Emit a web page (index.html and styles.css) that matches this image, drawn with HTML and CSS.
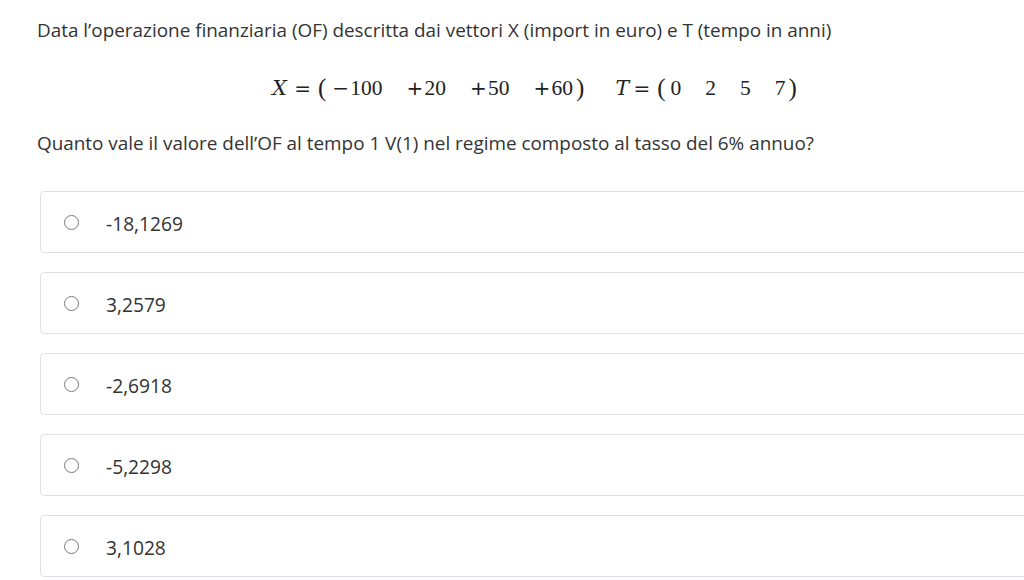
FILE: index.html
```html
<!DOCTYPE html>
<html lang="it">
<head>
<meta charset="utf-8">
<link rel="stylesheet" href="styles.css">
</head>
<body>
<div class="page">
  <p class="intro">Data l’operazione finanziaria (OF) descritta dai vettori X (import in euro) e T (tempo in anni)</p>
  <div class="math">
    <span class="var">X</span><span class="eq">=</span>
    <span class="paren">(</span>
    <span class="matrix x">
      <span class="cell"><span class="sign">−</span>100</span>
      <span class="cell"><span class="sign">+</span>20</span>
      <span class="cell"><span class="sign">+</span>50</span>
      <span class="cell"><span class="sign">+</span>60</span>
    </span>
    <span class="paren close">)</span>
    <span class="var t">T</span><span class="eq">=</span>
    <span class="paren">(</span>
    <span class="matrix t">
      <span class="cell">0</span><span class="cell">2</span><span class="cell">5</span><span class="cell">7</span>
    </span>
    <span class="paren">)</span>
  </div>
  <p class="question">Quanto vale il valore dell’OF al tempo 1 V(1) nel regime composto al tasso del 6% annuo?</p>
  <div class="options">
    <label class="option"><span class="radio"></span><span class="val">-18,1269</span></label>
    <label class="option"><span class="radio"></span><span class="val">3,2579</span></label>
    <label class="option"><span class="radio"></span><span class="val">-2,6918</span></label>
    <label class="option"><span class="radio"></span><span class="val">-5,2298</span></label>
    <label class="option"><span class="radio"></span><span class="val">3,1028</span></label>
  </div>
</div>
</body>
</html>
```
FILE: styles.css
```css
html, body {
  margin: 0;
  padding: 0;
  background: #fff;
  overflow: hidden;
}
.page {
  padding: 16px 0 0 37px;
  font-family: "Open Sans", "Noto Sans", sans-serif;
  font-size: 18.9px;
  color: #333;
}
.intro, .question {
  margin: 0;
  line-height: 28px;
}
.math {
  display: flex;
  justify-content: center;
  align-items: center;
  font-family: "Liberation Serif", "DejaVu Serif", serif;
  font-size: 21.5px;
  color: #222;
  margin: 28px 0 0 0;
  padding-left: 8px;
  height: 32px;
}
.var {
  font-family: "DejaVu Serif", "Liberation Serif", serif;
  font-style: italic;
  font-size: 20.5px;
  width: 19px;
}
.var.t {
  width: 15px;
  margin-left: 31px;
}
.eq {
  font-family: "DejaVu Sans", sans-serif;
  font-size: 20px;
  margin: 0 7px 0 3px;
}
.paren {
  font-size: 25px;
  line-height: 1;
  margin-top: -2px;
}
.paren.close { margin-left: 3px; }
.matrix {
  display: inline-flex;
  gap: 24px;
  margin-left: 6px;
}
.matrix.t {
  gap: 24px;
  margin-left: 5px;
  margin-right: 3px;
}
.cell {
  display: inline-flex;
  align-items: baseline;
}
.sign {
  font-family: "DejaVu Sans", sans-serif;
  font-size: 20px;
  width: 17px;
  text-align: left;
  margin-right: 1px;
}
.question { margin-top: 25px; }
.options {
  margin-top: 34px;
  margin-left: 3px;
  display: flex;
  flex-direction: column;
  gap: 19px;
}
.option {
  display: flex;
  align-items: center;
  height: 60px;
  width: 1000px;
  border: 1px solid #dee2e6;
  border-radius: 4px;
}
.radio {
  width: 15px;
  height: 15px;
  border: 1px solid #7a7a7a;
  border-radius: 50%;
  margin-left: 23px;
  margin-right: 27px;
  box-sizing: border-box;
  flex: none;
}
.val {
  font-size: 19.2px;
  padding-top: 3px;
}
```
